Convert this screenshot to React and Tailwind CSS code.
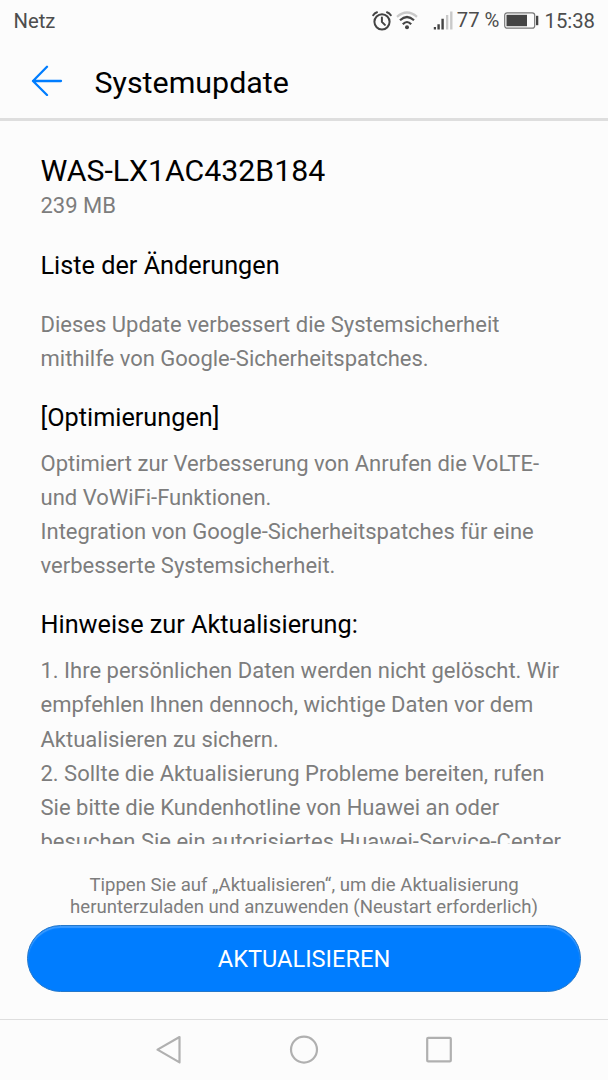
import React from 'react';

const optimizations = [
  'Optimiert zur Verbesserung von Anrufen die VoLTE-',
  'und VoWiFi-Funktionen.',
  'Integration von Google-Sicherheitspatches für eine',
  'verbesserte Systemsicherheit.',
];

const notes = [
  '1. Ihre persönlichen Daten werden nicht gelöscht. Wir',
  'empfehlen Ihnen dennoch, wichtige Daten vor dem',
  'Aktualisieren zu sichern.',
  '2. Sollte die Aktualisierung Probleme bereiten, rufen',
  'Sie bitte die Kundenhotline von Huawei an oder',
  'besuchen Sie ein autorisiertes Huawei-Service-Center',
];

function Heading({ children, className }) {
  return (
    <h2 className={`h-[34px] text-[25.25px] leading-[34px] text-black ${className}`}>
      {children}
    </h2>
  );
}

function Lines({ items, className }) {
  return (
    <p className={`text-[22px] leading-[34.3px] whitespace-nowrap text-[#7d7d7d] ${className}`}>
      {items.map((line) => (
        <span key={line} className="block">{line}</span>
      ))}
    </p>
  );
}

function StatusBar() {
  return (
    <div className="flex h-[41px] shrink-0 items-center justify-between pr-[13px] pl-[13.5px] text-[20.3px] leading-[41px] text-[#4d4d4d]">
      <span className="pt-[2px]">Netz</span>
      <div className="flex items-center whitespace-nowrap">
        <svg className="h-[20px] w-[20px]" viewBox="0 0 20 20" fill="none" stroke="#444" strokeWidth="2">
          <circle cx="10" cy="10.8" r="7.6" />
          <path d="M9.9 6.4v4.5l3 3M1.2 4.2Q2.6 2 5 1.2M18.8 4.2Q17.4 2 15 1.2" strokeLinecap="round" />
        </svg>
        <svg className="ml-[4px] h-[20px] w-[22px]" viewBox="0 0 22 20" fill="none" strokeWidth="2.2">
          <path d="M1 5.8Q11-2.8 21 5.8" stroke="#c9c9c9" />
          <path d="M4 9.2Q11 2.8 18 9.2M6.8 13.2Q11 8.8 15.2 13.2" stroke="#444" />
          <circle cx="11" cy="16.3" r="2" fill="#444" />
        </svg>
        <svg className="ml-[15px] h-[20px] w-[20px]" viewBox="0 0 20 20">
          <path d="M.8 16h2.2v2.6H.8zM4.4 13.2h2.4v5.4H4.4zM8.4 7.8h2.4v10.8H8.4z" fill="#444" />
          <path d="M13 4h2.3v14.6H13zM17.1 .6h2.4v18H17.1z" fill="#c9c9c9" />
        </svg>
        <span className="ml-[4px]">77 %</span>
        <svg className="ml-[5px] h-[18px] w-[35px]" viewBox="0 0 35 18">
          <rect x=".7" y=".8" width="30" height="15.4" rx="2.5" fill="none" stroke="#777" strokeWidth="1.2" />
          <path d="M2.5 2.8h20.5v11.4h-20.5z" fill="#444" />
          <path d="M32 3.8h2.3v9.4h-2.3z" fill="#444" />
        </svg>
        <span className="ml-[5px] pt-[2px]">15:38</span>
      </div>
    </div>
  );
}

export default function App() {
  return (
    <div className="flex h-[1080px] w-[608px] flex-col overflow-hidden bg-[#fcfcfc] font-['Roboto',sans-serif]">
      <StatusBar />

      <header className="flex h-[80px] shrink-0 items-center border-b-[3px] border-[#dedede] pl-[31px]">
        <svg className="h-[32px] w-[32px]" viewBox="0 0 32 32" fill="none" stroke="#007dff" strokeWidth="2.3" strokeLinecap="round" strokeLinejoin="round">
          <path d="M30 17H2M16 2.8L2 17L16 31" />
        </svg>
        <h1 className="mt-[6px] ml-[31.5px] text-[30.4px] leading-[36px] text-black">Systemupdate</h1>
      </header>

      <main className="h-[723px] shrink-0 overflow-hidden pt-[32px] pl-[40.5px]">
        <div className="h-[36px] text-[30.25px] leading-[36px] text-black">WAS-LX1AC432B184</div>
        <div className="mt-[2px] h-[30px] text-[22px] leading-[30px] text-[#7d7d7d]">239 MB</div>
        <Heading className="mt-[28px]">Liste der Änderungen</Heading>
        <Lines
          className="mt-[24.6px]"
          items={['Dieses Update verbessert die Systemsicherheit', 'mithilfe von Google-Sicherheitspatches.']}
        />
        <Heading className="mt-[24.4px]">[Optimierungen]</Heading>
        <Lines className="mt-[12px]" items={optimizations} />
        <Heading className="mt-[24.2px]">Hinweise zur Aktualisierung:</Heading>
        <Lines className="mt-[12px]" items={notes} />
      </main>

      <footer className="flex h-[175px] shrink-0 flex-col items-center pt-[30px]">
        <p className="text-center text-[18.6px] leading-[22px] whitespace-nowrap text-[#7d7d7d]">
          Tippen Sie auf „Aktualisieren“, um die Aktualisierung
          <br />
          herunterzuladen und anzuwenden (Neustart erforderlich)
        </p>
        <button className="mt-[7px] h-[67px] w-[554px] rounded-full border border-[#2478cb] bg-[#007dff] pt-[2px] text-[23.6px] leading-[63px] text-white shadow-[inset_0_2px_1px_#3b9bff]">
          AKTUALISIEREN
        </button>
      </footer>

      <nav className="flex h-[61px] shrink-0 items-center justify-center gap-[106px] border-t border-[#dedede]">
        <svg className="h-[30px] w-[28px]" viewBox="0 0 28 30" fill="none" stroke="#b0b0b0" strokeWidth="2.2" strokeLinejoin="round">
          <path d="M24.5 2L2.5 14.6L24.5 27.4z" />
        </svg>
        <svg className="h-[30px] w-[30px]" viewBox="0 0 30 30" fill="none" stroke="#b0b0b0" strokeWidth="2.2">
          <circle cx="15" cy="14.6" r="13" />
        </svg>
        <svg className="h-[30px] w-[28px]" viewBox="0 0 28 30" fill="none" stroke="#b0b0b0" strokeWidth="2.2">
          <rect x="2.2" y="2.8" width="23.6" height="23.6" rx="1" />
        </svg>
      </nav>
    </div>
  );
}
